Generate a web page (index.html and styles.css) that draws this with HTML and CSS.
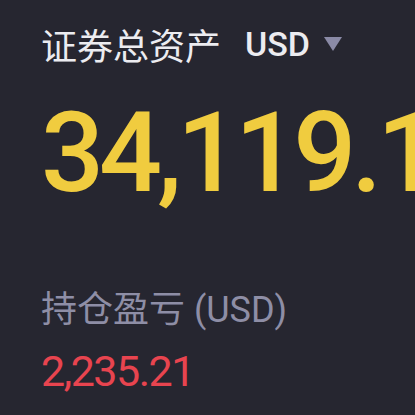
FILE: index.html
```html
<!DOCTYPE html>
<html lang="zh-CN">
<head>
<meta charset="utf-8">
<link rel="stylesheet" href="styles.css">
</head>
<body>
<div class="page">
  <div class="title-row">
    <span class="title">证券总资产</span>
    <span class="currency">USD</span>
    <span class="caret"></span>
  </div>
  <div class="total">34,119.16</div>
  <div class="label">持仓盈亏 (USD)</div>
  <div class="pnl">2,235.21</div>
</div>
</body>
</html>
```
FILE: styles.css
```css
html, body {
  margin: 0;
  padding: 0;
  background: #262630;
  width: 415px;
  height: 415px;
  overflow: hidden;
}
.page {
  padding: 22px 0 0 41px;
  font-family: Roboto, "Noto Sans CJK SC", sans-serif;
  white-space: nowrap;
}
.title-row {
  display: flex;
  align-items: center;
  height: 44px;
}
.title {
  font-family: "Noto Sans CJK SC", sans-serif;
  font-size: 36px;
  color: #ececf0;
  line-height: 44px;
}
.currency {
  margin-left: 24px;
  font-size: 34px;
  font-weight: 500;
  color: #ececf0;
  line-height: 44px;
}
.caret {
  margin-left: 14px;
  width: 0;
  height: 0;
  border-left: 9.5px solid transparent;
  border-right: 9.5px solid transparent;
  border-top: 14px solid #8a8aa6;
}
.total {
  margin-top: 27px;
  font-size: 111px;
  font-weight: 500;
  line-height: 120px;
  letter-spacing: -5px;
  color: #f0cc3f;
}
.label {
  margin-top: 75px;
  font-size: 36px;
  line-height: 44px;
  color: #8e8ea6;
}
.pnl {
  margin-top: 14px;
  font-size: 43px;
  line-height: 50px;
  letter-spacing: -1.5px;
  color: #e8444f;
}
```
